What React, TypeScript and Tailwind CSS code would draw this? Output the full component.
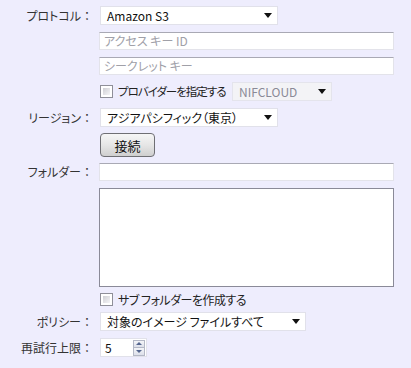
const font = "[font-family:'Noto_Sans_CJK_JP','Noto_Sans',sans-serif]"
const palt = "[font-feature-settings:'palt']"

function Arrow() {
  return (
    <svg width="8" height="5" viewBox="0 0 8 5" className="shrink-0">
      <path d="M0 0h8L4 5z" fill="#111" />
    </svg>
  )
}

function Select({ value, width, disabled }: { value: string; width: string; disabled?: boolean }) {
  return (
    <div
      className={`${width} h-[19px] flex items-center justify-between pl-[6px] pr-[5px] border ${palt} ${
        disabled ? 'bg-[#f3f3f6] border-[#e4e4ec] text-[#8a8a96]' : 'bg-white border-[#e1e1ea] text-[#111]'
      }`}
    >
      <span className="leading-none">{value}</span>
      <Arrow />
    </div>
  )
}

function TextBox({ placeholder, className = '' }: { placeholder?: string; className?: string }) {
  return (
    <div
      className={`w-[295px] h-[18px] bg-white border border-[#e3e3ea] border-t-[#a9a9b4] flex items-center px-[4px] text-[#a0a0a8] ${palt} ${className}`}
    >
      <span className="leading-none">{placeholder}</span>
    </div>
  )
}

function CheckBox() {
  return (
    <div className="w-[13px] h-[13px] border border-[#8f8f99] bg-white p-[2px] shrink-0">
      <div className="w-full h-full bg-gradient-to-br from-[#cfcfd4] to-[#f5f5f7]" />
    </div>
  )
}

function Row({ label, children, className = '' }: { label?: string; children: React.ReactNode; className?: string }) {
  return (
    <div className={`flex items-center ${className}`}>
      <div className="w-[93px] text-right text-[#333] shrink-0 leading-none whitespace-nowrap">
        {label && (
          <>
            <span className={palt}>{label}</span>
            <span>：</span>
          </>
        )}
      </div>
      <div className="ml-[7px] flex items-center">{children}</div>
    </div>
  )
}

export default function App() {
  return (
    <div className={`w-[411px] h-[368px] bg-[#eeedfd] text-[12px] ${font} pt-[6px]`}>
      <Row label="プロトコル">
        <Select value="Amazon S3" width="w-[178px]" />
      </Row>

      <Row className="mt-[7px]">
        <TextBox placeholder="アクセス キー ID" className="-ml-[1px]" />
      </Row>

      <Row className="mt-[7px]">
        <TextBox placeholder="シークレット キー" className="-ml-[1px]" />
      </Row>

      <Row className="mt-[7px]">
        <CheckBox />
        {/* label squeezed so the provider select lands where it should */}
        <span className={`ml-[5px] w-[114px] text-[11.5px] text-[#222] leading-none whitespace-nowrap tracking-[-1px] ${palt}`}>
          プロバイダーを指定する
        </span>
        <Select value="NIFCLOUD" width="w-[100px]" disabled />
      </Row>

      <Row label="リージョン" className="mt-[7px]">
        <Select value="アジアパシフィック（東京）" width="w-[178px]" />
      </Row>

      <Row className="mt-[6px]">
        <button
          type="button"
          className="w-[55px] h-[24px] rounded-[4px] border border-[#6f6f74] bg-gradient-to-b from-[#f6f6f6] via-[#e6e6e6] to-[#cfcfcf] text-[13px] text-[#111] leading-none"
        >
          接続
        </button>
      </Row>

      <Row label="フォルダー" className="mt-[6px]">
        <TextBox className="-ml-[1px]" />
      </Row>

      <Row className="mt-[7px]">
        <div className="-ml-[1px] w-[295px] h-[99px] bg-white border border-[#8a8a98]" />
      </Row>

      <Row className="mt-[6px]">
        <CheckBox />
        <span className={`ml-[5px] text-[#222] leading-none whitespace-nowrap tracking-[-0.5px] ${palt}`}>
          サブ フォルダーを作成する
        </span>
      </Row>

      <Row label="ポリシー" className="mt-[6px]">
        <Select value="対象のイメージ ファイルすべて" width="w-[206px]" />
      </Row>

      <Row label="再試行上限" className="mt-[7px]">
        <div className="w-[47px] h-[19px] bg-white border border-[#e1e1ea] flex items-center justify-between pl-[4px] pr-[1px]">
          <span className="leading-none text-[#111]">5</span>
          <div className="flex flex-col">
            <div className="w-[12px] h-[8px] border border-[#b4b8c6] bg-gradient-to-b from-[#f4f5f8] to-[#dde0ea] flex items-center justify-center">
              <svg width="6" height="3" viewBox="0 0 6 3">
                <path d="M0 3h6L3 0z" fill="#55668f" />
              </svg>
            </div>
            <div className="w-[12px] h-[8px] border border-t-0 border-[#b4b8c6] bg-gradient-to-b from-[#f4f5f8] to-[#dde0ea] flex items-center justify-center">
              <svg width="6" height="3" viewBox="0 0 6 3">
                <path d="M0 0h6L3 3z" fill="#55668f" />
              </svg>
            </div>
          </div>
        </div>
      </Row>
    </div>
  )
}
